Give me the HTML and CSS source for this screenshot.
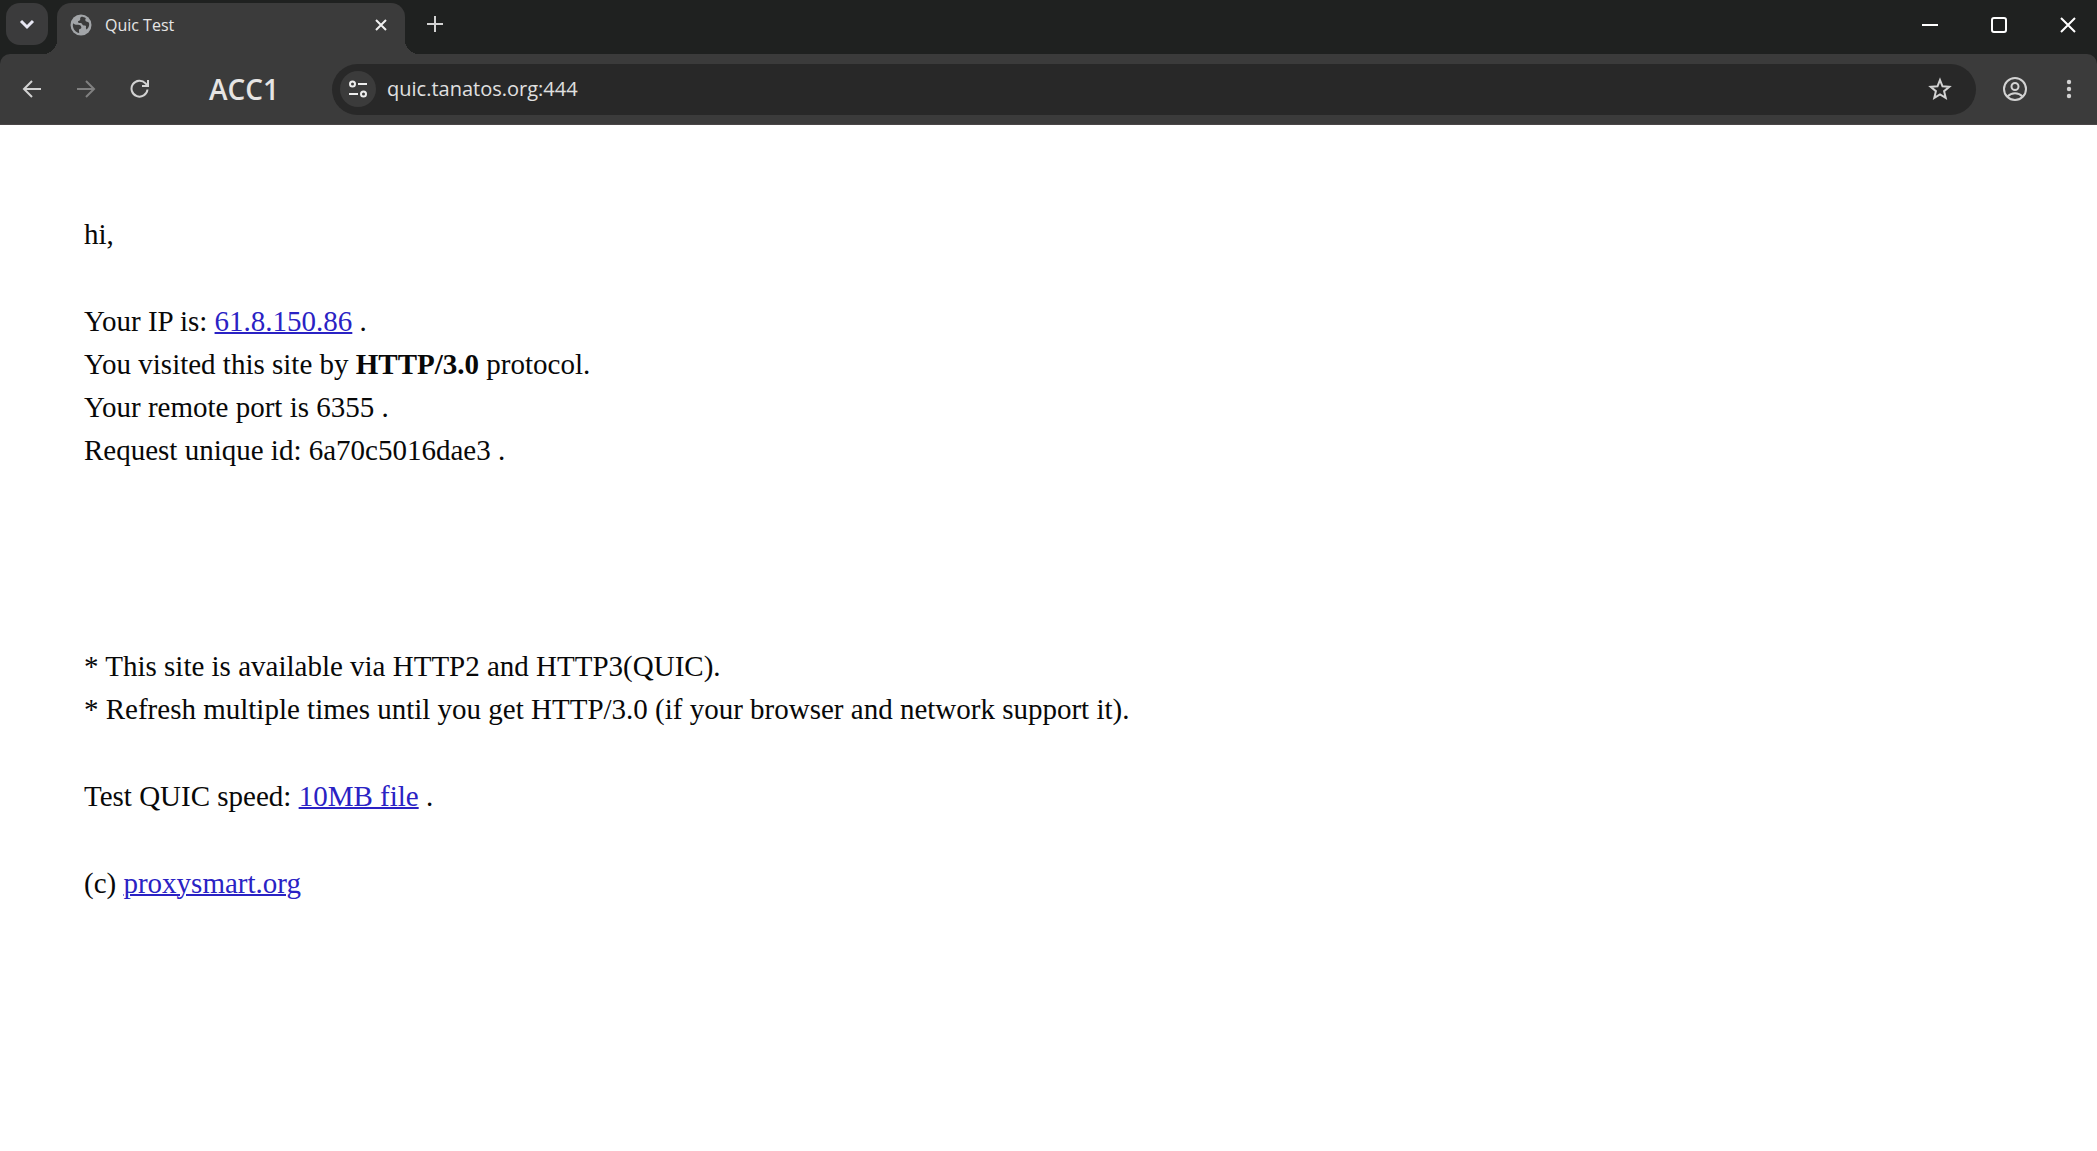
FILE: index.html
```html
<!DOCTYPE html>
<html lang="en">
<head>
<meta charset="utf-8">
<title>Quic Test</title>
<link rel="stylesheet" href="styles.css">
</head>
<body>
<header class="browser">
  <div class="tabstrip">
    <button class="tab-search" aria-label="Search tabs"><svg width="16" height="16" viewBox="0 0 16 16"><path d="M2 5l6 6 6-6"/></svg></button>
    <div class="tab">
      <svg class="globe" width="22" height="22" viewBox="0 0 22 22"><circle cx="11" cy="11" r="10.500"/><path d="M3.200 9.200c1.500 1.800 3.300 1.700 4.600 1.600 1.900-.1 3.200.7 3.500 2.300.2 1.200-.3 1.700-1.400 1.900-.9.200-1 .8-.9 1.900l.2 2.200C5.600 18.400 2.800 15 2.800 11zM11.400 2.800c-1 .6-1.400 1.400-1.200 2.200.2.900-.2 1.500-1.100 1.700-1 .2-1.300.8-1 1.500.3.600 1 .9 2.100.9 1.300 0 1.800.7 2.200 1.400.5.900 1.400 1 2.400.9 1.200-.1 1.400.8 1.200 1.700-.2 1-.1 1.800.5 2.500 1.700-1.500 2.700-3.300 2.700-5.100 0-1.400-.5-2.300-1.400-2.500-1-.2-1.900-.3-2.300-1.200-.4-.9-.2-1.800.4-2.500-1.300-1-2.900-1.500-4.500-1.500z"/></svg>
      <span class="tab-title">Quic Test</span>
      <button class="tab-close" aria-label="Close tab"><svg width="14" height="14" viewBox="0 0 14 14"><path d="M2 2l10 10M12 2L2 12"/></svg></button>
    </div>
    <button class="new-tab" aria-label="New tab"><svg width="16" height="16" viewBox="0 0 16 16"><path d="M8 0v16M0 8h16"/></svg></button>
    <div class="window-controls">
      <button aria-label="Minimize"><svg width="16" height="16" viewBox="0 0 16 16"><path d="M0 8h16"/></svg></button>
      <button aria-label="Maximize"><svg width="16" height="16" viewBox="0 0 16 16"><rect x="1" y="1" width="14" height="14" rx="2"/></svg></button>
      <button aria-label="Close"><svg width="16" height="16" viewBox="0 0 16 16"><path d="M1 1l14 14M15 1L1 15"/></svg></button>
    </div>
  </div>
  <div class="toolbar">
    <button aria-label="Back"><svg width="20" height="20" viewBox="0 0 20 20"><path d="M19 10H2M10 2l-8 8 8 8"/></svg></button>
    <button class="disabled" aria-label="Forward" disabled><svg width="20" height="20" viewBox="0 0 20 20"><path d="M1 10h17M10 2l8 8-8 8"/></svg></button>
    <button aria-label="Reload"><svg width="20" height="20" viewBox="0 0 20 20"><path d="M17.500 10.500a8 8 0 1 1-2-6.200L18 7M18 1v6h-6"/></svg></button>
    <span class="profile-name">ACC1</span>
    <div class="omnibox">
      <button class="site-info" aria-label="View site information"><svg width="20" height="20" viewBox="0 0 20 20"><circle cx="4.500" cy="5" r="2.500"/><path d="M10 5h9M1 15h9"/><circle cx="15.500" cy="15" r="2.500"/></svg></button>
      <input class="url" type="text" aria-label="Address" value="quic.tanatos.org:444" spellcheck="false">
      <button class="bookmark" aria-label="Bookmark this tab"><svg width="24" height="24" viewBox="0 0 24 24"><path d="M12 3l2.500 6.300 6.800.5-5.200 4.400 1.600 6.600-5.700-3.500-5.700 3.500 1.600-6.600-5.200-4.400 6.800-.5z"/></svg></button>
    </div>
    <button class="account" aria-label="Profile"><svg width="26" height="26" viewBox="0 0 26 26"><circle cx="13" cy="13" r="11"/><circle cx="13" cy="10.500" r="3.500"/><path d="M5.500 20.500c4-4.300 11-4.300 15 0"/></svg></button>
    <button class="menu" aria-label="Menu"><svg width="20" height="20" viewBox="0 0 20 20"><circle cx="10" cy="3" r="2.200"/><circle cx="10" cy="10" r="2.200"/><circle cx="10" cy="17" r="2.200"/></svg></button>
  </div>
</header>
<main class="page">
  <p>hi,</p>
  <p>Your IP is: <a href="#ip">61.8.150.86</a> .<br>
  You visited this site by <b>HTTP/3.0</b> protocol.<br>
  Your remote port is 6355 .<br>
  Request unique id: 6a70c5016dae3 .</p>
  <p class="notes">* This site is available via HTTP2 and HTTP3(QUIC).<br>
  * Refresh multiple times until you get HTTP/3.0 (if your browser and network support it).</p>
  <p>Test QUIC speed: <a href="#file">10MB file</a> .</p>
  <p>(c) <a href="#home">proxysmart.org</a></p>
</main>
</body>
</html>
```
FILE: styles.css
```css
* {
  box-sizing: border-box;
}

body {
  margin: 0;
  background: #fff;
  color: #080808;
}

button {
  display: flex;
  align-items: center;
  justify-content: center;
  flex: none;
  padding: 0;
  border: 0;
  background: none;
  color: #d2d2d2;
}

svg {
  display: block;
  fill: none;
  stroke: currentColor;
  stroke-width: 2;
}

.browser {
  font-family: "Open Sans", "Noto Sans", sans-serif;
  background: #1f2120;
  color: #e6e6e6;
}

.tabstrip {
  display: flex;
  height: 54px;
  padding: 3px 0 0 6px;
}

.tab-search {
  width: 42px;
  height: 42px;
  margin-right: 9px;
  border-radius: 14px;
  background: #3b3b3c;
  color: #e8e8f4;
}

.tab-search svg {
  stroke-width: 3;
}

.tab {
  position: relative;
  display: flex;
  align-items: center;
  gap: 13px;
  width: 348px;
  padding: 0 16px 8px 13px;
  border-radius: 14px 14px 0 0;
  background: #3b3b3b;
}

.tab::before,
.tab::after {
  content: "";
  position: absolute;
  bottom: 0;
  width: 14px;
  height: 14px;
}

.tab::before {
  right: 100%;
  background: radial-gradient(circle at 0 0, transparent 14px, #3b3b3b 14px);
}

.tab::after {
  left: 100%;
  background: radial-gradient(circle at 100% 0, transparent 14px, #3b3b3b 14px);
}

.globe {
  fill: #3b3b3b;
  stroke: none;
}

.globe circle {
  fill: #a2a5a8;
}

.tab-title {
  flex: 1;
  font-size: 16px;
  line-height: 24px;
}

.tab-close {
  width: 16px;
  height: 16px;
  color: #f0f0f0;
}

.new-tab {
  width: 32px;
  height: 42px;
  margin-left: 14px;
}

.window-controls {
  display: flex;
  margin-left: auto;
  margin-right: -5px;
}

.window-controls button {
  width: 69px;
  height: 44px;
  color: #fff;
}

.browser {
  overflow: hidden;
}

.toolbar {
  display: flex;
  align-items: center;
  height: 71px;
  padding: 0 1px 0 5px;
  border-radius: 10px 10px 0 0;
  border-bottom: 1px solid #4a4647;
  background: #3b3b3b;
}

.toolbar > button {
  width: 54px;
  height: 54px;
}

.toolbar .disabled {
  color: #808080;
}

.profile-name {
  width: 165px;
  padding-left: 42px;
  color: #e6e4e3;
  font-size: 28px;
  font-weight: 600;
  line-height: 40px;
}

.omnibox {
  display: flex;
  align-items: center;
  flex: 1;
  height: 51px;
  padding: 0 24px 0 8px;
  border-radius: 26px;
  background: #282828;
}

.site-info {
  width: 36px;
  height: 36px;
  border-radius: 50%;
  background: #3b3b3b;
  color: #eee;
}

.url {
  flex: 1;
  min-width: 0;
  padding: 0 0 0 11px;
  border: 0;
  outline: 0;
  background: none;
  color: #e0e0e0;
  font: 20px/28px "Open Sans", "Noto Sans", sans-serif;
}

.toolbar > .account {
  margin-left: 12px;
}

.menu svg {
  fill: currentColor;
  stroke: none;
}

.page {
  display: flex;
  flex-direction: column;
  gap: 44px;
  padding: 88px 84px;
  font: 29px/43px "Liberation Serif", serif;
}

.page p {
  margin: 0;
}

.page .notes {
  margin-top: 129px;
}

.page a {
  color: #2a22c4;
  text-decoration-thickness: 2px;
}
```
